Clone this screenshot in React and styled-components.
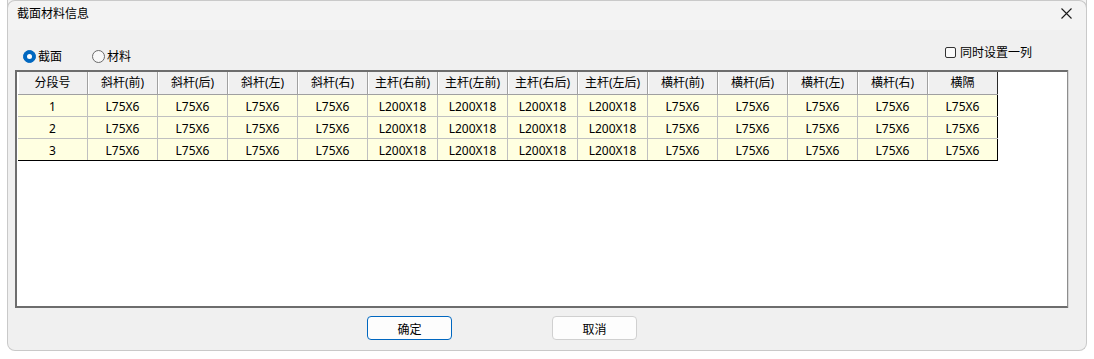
import React from 'react';
import styled, { createGlobalStyle } from 'styled-components';

const columns = [
	'分段号', '斜杆(前)', '斜杆(后)', '斜杆(左)', '斜杆(右)',
	'主杆(右前)', '主杆(左前)', '主杆(右后)', '主杆(左后)',
	'横杆(前)', '横杆(后)', '横杆(左)', '横杆(右)', '横隔'
];

const rowValues = ['L75X6', 'L75X6', 'L75X6', 'L75X6', 'L200X18', 'L200X18', 'L200X18', 'L200X18', 'L75X6', 'L75X6', 'L75X6', 'L75X6', 'L75X6'];

const rows = [1, 2, 3].map((n) => [String(n), ...rowValues]);

export default function App() {
	return (
		<>
			<GlobalStyle />
			<Window>
				<TitleBar>
					<Title>截面材料信息</Title>
					<CloseButton aria-label="close">
						<svg width="11" height="11" viewBox="0 0 11 11">
							<path d="M0.5 0.5 L10.5 10.5 M10.5 0.5 L0.5 10.5" stroke="#1a1a1a" strokeWidth="1.1" fill="none" />
						</svg>
					</CloseButton>
				</TitleBar>
				<Body>
					<OptionsRow>
						<RadioGroup>
							<RadioLabel>
								<Radio checked />
								截面
							</RadioLabel>
							<RadioLabel>
								<Radio />
								材料
							</RadioLabel>
						</RadioGroup>
						<CheckLabel>
							<CheckBox />
							同时设置一列
						</CheckLabel>
					</OptionsRow>
					<GridBox>
						<Table>
							<thead>
								<Row>
									{columns.map((c, i) => (
										<HeadCell key={c} $last={i === columns.length - 1}>{c}</HeadCell>
									))}
								</Row>
							</thead>
							<tbody>
								{rows.map((r, ri) => (
									<Row key={ri}>
										{r.map((v, ci) => (
											<Cell key={ci} $last={ci === r.length - 1} $bottom={ri === rows.length - 1}>{v}</Cell>
										))}
									</Row>
								))}
							</tbody>
						</Table>
					</GridBox>
					<ButtonRow>
						<Button $primary>确定</Button>
						<Button>取消</Button>
					</ButtonRow>
				</Body>
			</Window>
		</>
	);
}

const GlobalStyle = createGlobalStyle`
	html, body {
		margin: 0;
		padding: 0;
		background: #ffffff;
	}
	body {
		font-family: "Noto Sans", "Noto Sans CJK SC", sans-serif;
		font-size: 12px;
		color: #000;
	}
`;

const Window = styled.div`
	margin-left: 7px;
	width: 1080px;
	height: 351px;
	box-sizing: border-box;
	border: 1px solid #c9c9c9;
	border-top: none;
	border-radius: 0 0 8px 8px;
	background: #f0f0f0;
	display: flex;
	flex-direction: column;
	overflow: hidden;
	position: relative;

	&::before {
		content: '';
		position: absolute;
		left: -1px;
		right: -1px;
		top: 0;
		height: 8px;
		border: 1px solid #c9c9c9;
		border-bottom: none;
		border-radius: 8px 8px 0 0;
		pointer-events: none;
	}
`;

const TitleBar = styled.div`
	height: 30px;
	flex: none;
	display: flex;
	align-items: center;
	justify-content: space-between;
	padding: 0 10px 0 9px;
	background: #f3f3f3;
`;

const Title = styled.span`
	font-size: 12px;
	line-height: 1;
	margin-top: -2px;
`;

const CloseButton = styled.div`
	width: 11px;
	height: 11px;
	display: flex;
	margin-right: 4px;
	margin-top: -3px;
`;

const Body = styled.div`
	flex: 1;
	display: flex;
	flex-direction: column;
`;

const OptionsRow = styled.div`
	height: 40px;
	flex: none;
	display: flex;
	align-items: flex-start;
	justify-content: space-between;
	padding: 0 54px 0 15px;
`;

const RadioGroup = styled.div`
	display: flex;
	gap: 30px;
	margin-top: 18px;
`;

const RadioLabel = styled.label`
	display: flex;
	align-items: center;
	gap: 2px;
	font-size: 12px;
	height: 16px;
`;

const Radio = styled.span`
	width: 13px;
	height: 13px;
	box-sizing: border-box;
	border-radius: 50%;
	position: relative;
	background: ${(p) => (p.checked ? '#0067c0' : '#f8f8f8')};
	border: 1px solid ${(p) => (p.checked ? '#0067c0' : '#6a6a6a')};

	&::after {
		content: '';
		display: ${(p) => (p.checked ? 'block' : 'none')};
		position: absolute;
		left: 3px;
		top: 3px;
		width: 5px;
		height: 5px;
		border-radius: 50%;
		background: #fff;
	}
`;

const CheckLabel = styled.label`
	display: flex;
	align-items: center;
	gap: 4px;
	margin-top: 14px;
	height: 16px;
	font-size: 12px;
`;

const CheckBox = styled.span`
	width: 11px;
	height: 11px;
	box-sizing: border-box;
	border: 1px solid #333;
	border-radius: 2px;
	background: #fafafa;
`;

const GridBox = styled.div`
	margin-left: 7px;
	width: 1053px;
	height: 238px;
	box-sizing: border-box;
	flex: none;
	background: #fff;
	border-top: 2px solid #6d6d6d;
	border-left: 2px solid #6d6d6d;
	border-right: 1px solid #8d8d8d;
	border-bottom: 2px solid #6d6d6d;
	box-shadow: 1px 0 0 #d8d8d8;
`;

const Table = styled.table`
	border-collapse: collapse;
	table-layout: fixed;
	font-size: 12px;
	margin-left: 1px;
`;

const Row = styled.tr`
	height: 22px;
`;

const HeadCell = styled.th`
	width: 69px;
	padding: 1px 0 0;
	font-weight: normal;
	text-align: center;
	background: #f0f0f0;
	border-right: 1px solid ${(p) => (p.$last ? '#2a2a2a' : '#a0a0a0')};
	border-bottom: 1px solid #a0a0a0;
	box-shadow: inset 1px 0 0 #ffffff;
	line-height: 20px;
`;

const Cell = styled.td`
	padding: 2px 0 0;
	text-align: center;
	background: #ffffe1;
	border-right: 1px solid ${(p) => (p.$last ? '#000' : '#c0c0c0')};
	border-bottom: 1px solid ${(p) => (p.$bottom ? '#000' : '#c0c0c0')};
	line-height: 19px;
`;

const ButtonRow = styled.div`
	display: flex;
	gap: 100px;
	padding-left: 359px;
	margin-top: 8px;
`;

const Button = styled.button`
	width: 85px;
	height: 24px;
	box-sizing: border-box;
	border-radius: 4px;
	border: 1px solid ${(p) => (p.$primary ? '#0067c0' : '#d0d0d0')};
	background: #fdfdfd;
	font-family: "Noto Sans CJK SC", sans-serif;
	font-size: 12px;
	color: #000;
	padding: 0;
`;
